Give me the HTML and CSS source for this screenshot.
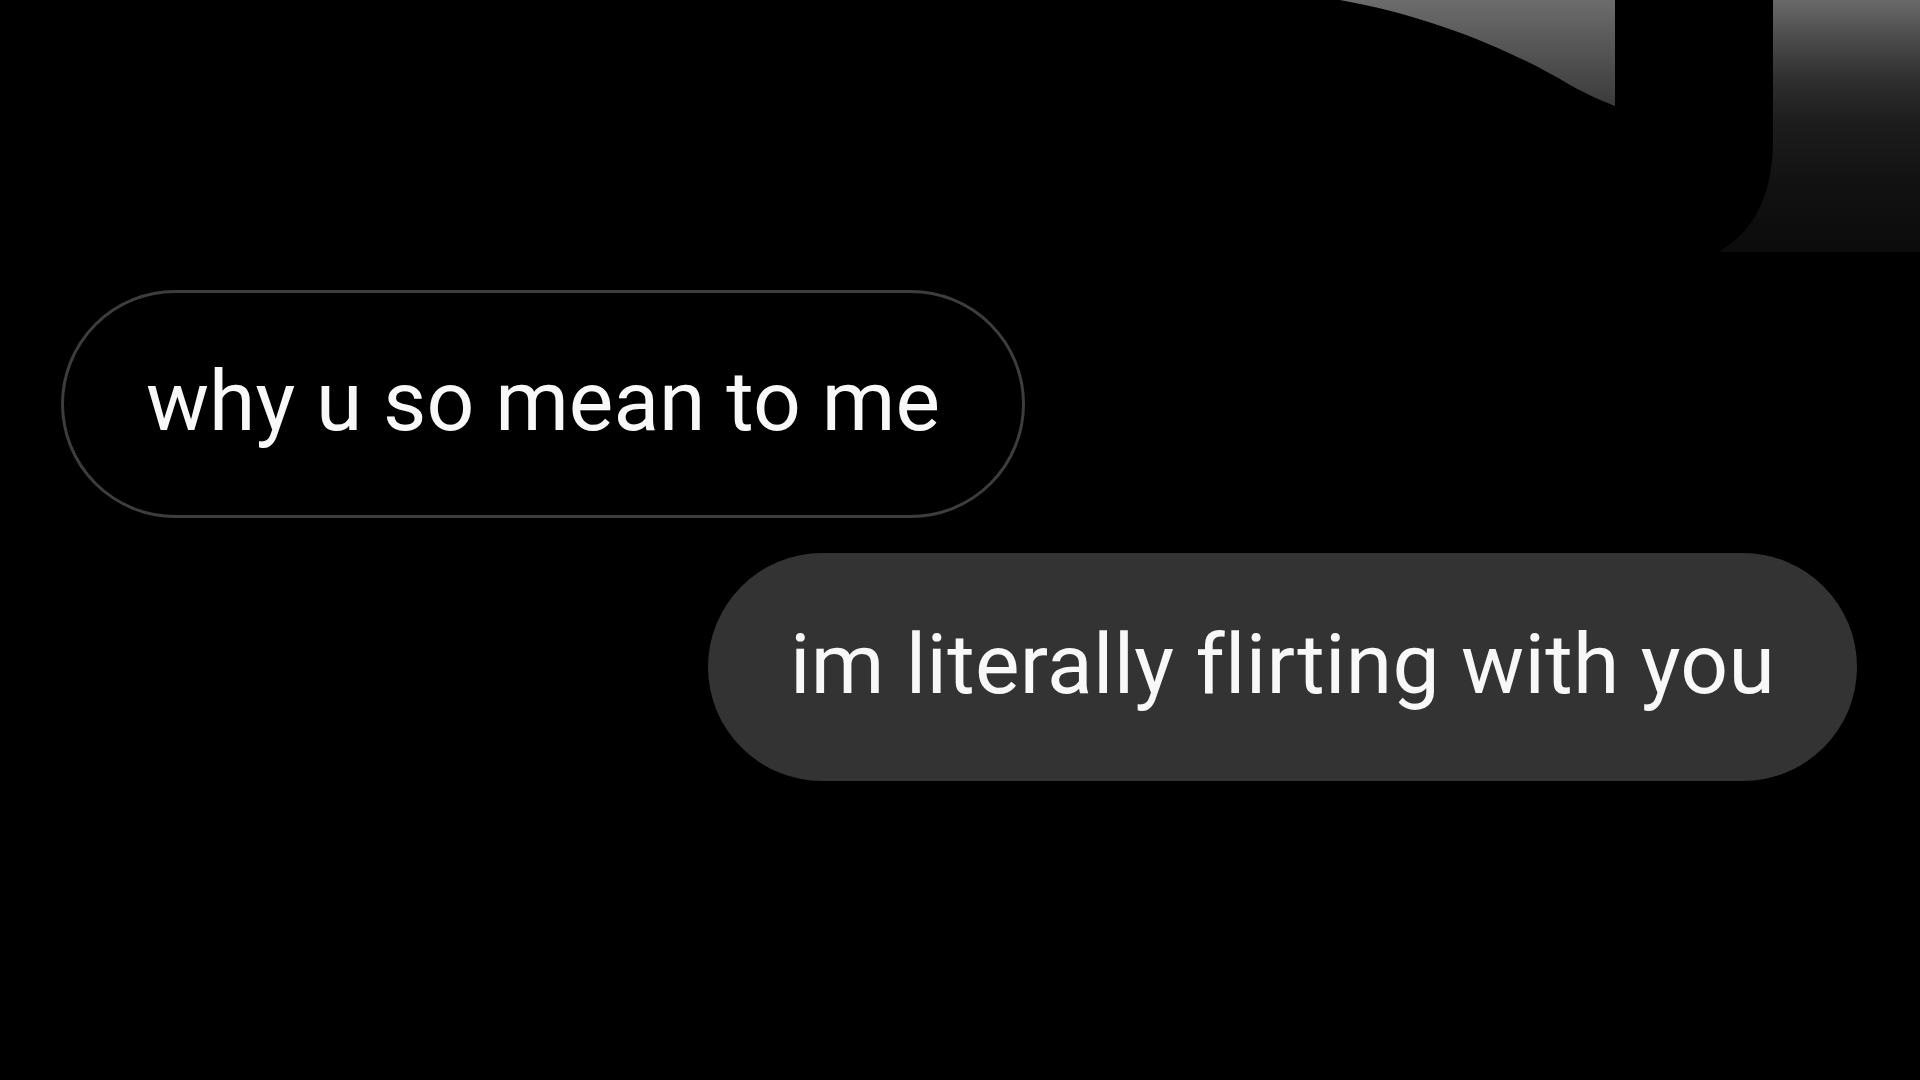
FILE: index.html
```html
<!DOCTYPE html>
<html lang="en">
<head>
	<meta charset="utf-8">
	<title>Messages</title>
	<link rel="stylesheet" href="styles.css">
</head>
<body>

	<!-- cropped photo edge in the top right corner -->
	<svg class="corner" width="600" height="260" viewBox="0 0 600 260" aria-hidden="true">
		<defs>
			<linearGradient id="fadeLeft" x1="0" y1="0" x2="0" y2="1">
				<stop offset="0" stop-color="#6c6c6c"/>
				<stop offset="1" stop-color="#3a3a3a"/>
			</linearGradient>
			<linearGradient id="fadeRight" x1="0" y1="0" x2="0" y2="1">
				<stop offset="0" stop-color="#696969"/>
				<stop offset="0.16" stop-color="#4a4a4a"/>
				<stop offset="0.32" stop-color="#2e2e2e"/>
				<stop offset="0.48" stop-color="#1d1d1d"/>
				<stop offset="0.72" stop-color="#121212"/>
				<stop offset="1" stop-color="#0b0b0b"/>
			</linearGradient>
		</defs>
		<path d="M20,0 C120,18 200,55 250,85 C270,96 285,102 295,106 L295,0 Z" fill="url(#fadeLeft)"/>
		<path d="M453,0 L600,0 L600,252 L398,252 C430,235 453,200 453,140 Z" fill="url(#fadeRight)"/>
	</svg>

	<main class="chat">
		<div class="msg msg-in">why u so mean to me</div>
		<div class="msg msg-out">im literally flirting with you</div>
	</main>

</body>
</html>
```

FILE: styles.css
```css
html, body {
	margin: 0;
	background-color: #000;
}
body {
	min-height: 1080px;
	font-family: Roboto, "Liberation Sans", sans-serif;
	overflow: hidden;
}
.corner {
	position: absolute;
	top: 0;
	right: 0;
}
.chat {
	display: flex;
	flex-direction: column;
	gap: 35px;
	padding: 290px 63px 0 61px;
}
.msg {
	box-sizing: border-box;
	display: flex;
	align-items: center;
	height: 228px;
	padding: 0 82px 4px;
	border-radius: 114px;
	font-size: 84px;
	line-height: 1;
	font-variant-ligatures: none;
	color: #f8f8f8;
	white-space: nowrap;
}
.msg-in {
	align-self: flex-start;
	border: 3px solid #3d3d3d;
}
.msg-out {
	align-self: flex-end;
	background-color: #333;
	letter-spacing: 0.3px;
}
```
